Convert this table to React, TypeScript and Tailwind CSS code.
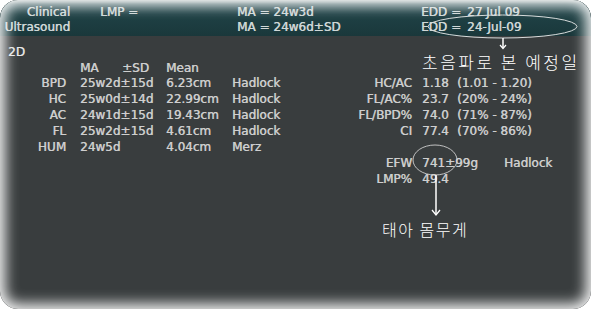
import React from "react";

const biometry = [
  { label: "BPD", ma: "25w2d±15d", mean: "6.23cm", method: "Hadlock" },
  { label: "HC", ma: "25w0d±14d", mean: "22.99cm", method: "Hadlock" },
  { label: "AC", ma: "24w1d±15d", mean: "19.43cm", method: "Hadlock" },
  { label: "FL", ma: "25w2d±15d", mean: "4.61cm", method: "Hadlock" },
  { label: "HUM", ma: "24w5d", mean: "4.04cm", method: "Merz" },
];

const ratios = [
  { label: "HC/AC", value: "1.18", extra: "(1.01 - 1.20)" },
  { label: "FL/AC%", value: "23.7", extra: "(20% - 24%)" },
  { label: "FL/BPD%", value: "74.0", extra: "(71% - 87%)" },
  { label: "CI", value: "77.4", extra: "(70% - 86%)" },
  null,
  { label: "EFW", value: "741±99g", extra: "Hadlock", far: true },
  { label: "LMP%", value: "49.4", extra: "" },
];

export default function App() {
  return (
    <div className="relative w-[595px] h-[313px] bg-white overflow-hidden font-['DejaVu_Sans',sans-serif]">
      <div className="relative h-[309px] w-[591px] rounded-[18px] bg-[#393d3e] overflow-hidden">
        {/* top info bar */}
        <div className="h-[36px] pt-[5px] text-[12px] leading-[15px] text-[#d0d8d8] [text-shadow:0.5px_0_0_#c4cccc] bg-[linear-gradient(180deg,#8a9b9b_0px,#34555a_4px,#1f4145_14px,#1a383b_36px)]">
          <div className="flex">
            <div className="w-[70px] text-right">Clinical</div>
            <div className="w-[167px] pl-[30px]">LMP =</div>
            <div className="w-[184px]">MA = 24w3d</div>
            <div className="flex">
              <span className="w-[46px]">EDD =</span>
              <span>27 Jul 09</span>
            </div>
          </div>
          <div className="flex">
            <div className="w-[70px] text-right">Ultrasound</div>
            <div className="w-[167px] pl-[30px]"></div>
            <div className="w-[184px]">MA = 24w6d±SD</div>
            <div className="flex">
              <span className="w-[46px]">EDD =</span>
              <span>24-Jul-09</span>
            </div>
          </div>
        </div>

        {/* measurements */}
        <div className="pt-[8px] text-[12px] text-[#cfcfcf] [text-shadow:0.5px_0_0_#bdbdbd]">
          <div className="pl-[8px] leading-[16px] text-[#e8e8e8]">2D</div>
          <div className="flex">
            <div className="w-[340px]">
              <div className="mt-[1px] grid grid-cols-[66px_100px_66px_108px] leading-[14px]">
                <div></div>
                <div className="pl-[14px]">
                  <span className="inline-block w-[42px]">MA</span>±SD
                </div>
                <div>Mean</div>
                <div></div>
              </div>
              {biometry.map((r) => (
                <div key={r.label} className="grid grid-cols-[66px_100px_66px_108px] leading-[16px]">
                  <div className="text-right">{r.label}</div>
                  <div className="pl-[14px]">{r.ma}</div>
                  <div>{r.mean}</div>
                  <div>{r.method}</div>
                </div>
              ))}
            </div>
            <div className="mt-[15px]">
              {ratios.map((r, i) =>
                r ? (
                  <div key={r.label} className="grid grid-cols-[72px_45px_auto] leading-[16px]">
                    <div className="text-right">{r.label}</div>
                    <div className="pl-[10px] whitespace-nowrap">{r.value}</div>
                    <div className={r.far ? "pl-[47px]" : ""}>{r.extra}</div>
                  </div>
                ) : (
                  <div key={i} className="h-[16px]"></div>
                )
              )}
            </div>
          </div>
        </div>

        {/* feathered screen edge */}
        <div className="pointer-events-none absolute inset-0 rounded-[18px] shadow-[inset_0_0_14px_5px_rgba(255,255,255,0.95)]"></div>
      </div>

      {/* annotations */}
      <svg className="pointer-events-none absolute left-0 top-0" width="595" height="313" viewBox="0 0 595 313">
        <ellipse cx="502.5" cy="26.5" rx="74.5" ry="11.5" fill="none" stroke="#d8dcdc" strokeWidth="1" />
        <line x1="503" y1="38" x2="503" y2="48" stroke="#ffffff" strokeWidth="1.5" />
        <polyline points="500,45 503,48.5 506,45" fill="none" stroke="#ffffff" strokeWidth="1.2" />
        <ellipse cx="435" cy="160" rx="22" ry="15" fill="none" stroke="#cfcfcf" strokeWidth="0.9" />
        <line x1="436" y1="175" x2="436" y2="215" stroke="#ffffff" strokeWidth="1.5" />
        <polyline points="432,210 436,215 440,210" fill="none" stroke="#ffffff" strokeWidth="1.3" />
      </svg>
      <div className="absolute left-[422px] top-[52px] text-[17px] leading-[20px] tracking-[2.5px] text-white font-light font-['Noto_Sans_CJK_KR',sans-serif] whitespace-nowrap">
        초음파로 본 예정일
      </div>
      <div className="absolute left-[382px] top-[219px] text-[16px] leading-[20px] tracking-[1.5px] text-white font-light font-['Noto_Sans_CJK_KR',sans-serif] whitespace-nowrap">
        태아 몸무게
      </div>
    </div>
  );
}
